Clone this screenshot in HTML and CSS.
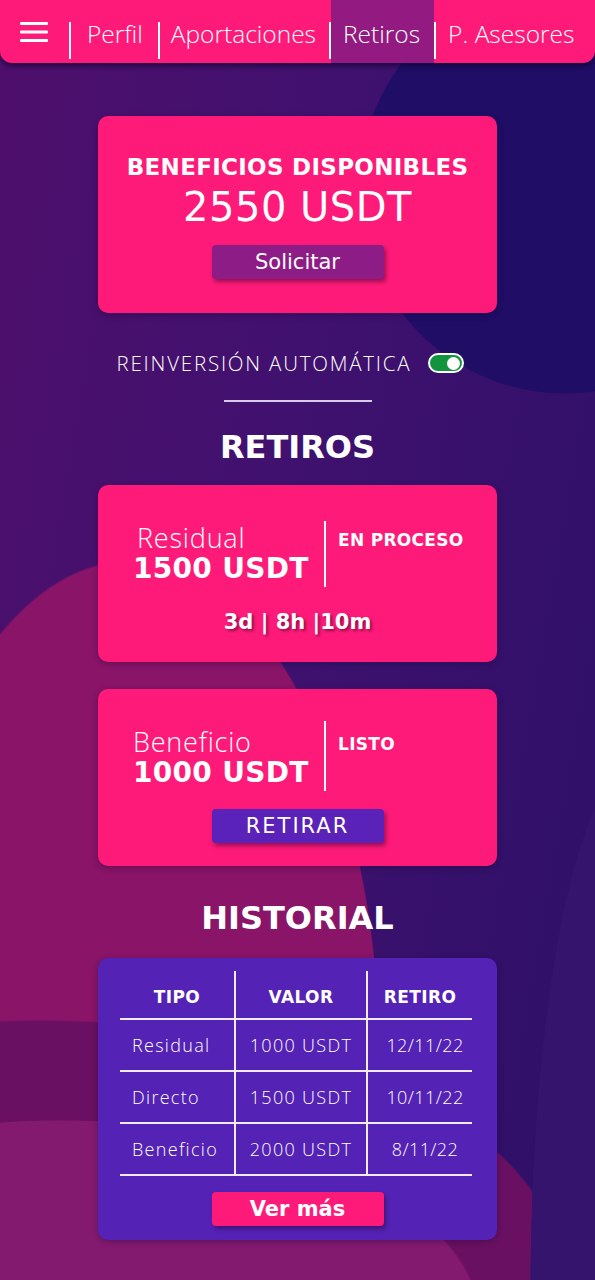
FILE: index.html
```html
<!DOCTYPE html>
<html lang="es">
<head>
<meta charset="utf-8">
<title>Retiros</title>
<link rel="stylesheet" href="styles.css">
</head>
<body>
<div class="page">
  <nav class="topbar">
    <button class="menu" aria-label="Menú">
      <svg width="28" height="20" viewBox="0 0 28 20"><rect x="0" y="0" width="28" height="3" rx="1" fill="#fff"/><rect x="0" y="8.5" width="28" height="3" rx="1" fill="#fff"/><rect x="0" y="17" width="28" height="3" rx="1" fill="#fff"/></svg>
    </button>
    <span class="sep"></span>
    <a class="tab tab-perfil">Perfil</a>
    <span class="sep"></span>
    <a class="tab tab-aport">Aportaciones</a>
    <span class="sep"></span>
    <a class="tab tab-retiros active">Retiros</a>
    <span class="sep"></span>
    <a class="tab tab-ases">P. Asesores</a>
  </nav>

  <main class="content">
    <section class="card balance">
      <h2 class="balance-title">BENEFICIOS DISPONIBLES</h2>
      <div class="balance-amount">2550 USDT</div>
      <button class="btn btn-purple">Solicitar</button>
    </section>

    <div class="reinvest">
      <span>REINVERSIÓN AUTOMÁTICA</span>
      <span class="toggle"><span class="knob"></span></span>
    </div>
    <hr class="divider">

    <h1 class="section-title retiros-title">RETIROS</h1>

    <section class="card withdraw">
      <div class="withdraw-row">
        <div class="withdraw-left">
          <div class="w-type indent">Residual</div>
          <div class="w-amount">1500 USDT</div>
        </div>
        <span class="vline"></span>
        <div class="w-status">EN PROCESO</div>
      </div>
      <div class="countdown">3d | 8h |10m</div>
    </section>

    <section class="card withdraw ready">
      <div class="withdraw-row">
        <div class="withdraw-left">
          <div class="w-type">Beneficio</div>
          <div class="w-amount">1000 USDT</div>
        </div>
        <span class="vline"></span>
        <div class="w-status">LISTO</div>
      </div>
      <button class="btn btn-violet">RETIRAR</button>
    </section>

    <h1 class="section-title historial-title">HISTORIAL</h1>

    <section class="card history">
      <table class="hist-table">
        <thead>
          <tr><th>TIPO</th><th>VALOR</th><th>RETIRO</th></tr>
        </thead>
        <tbody>
          <tr><td>Residual</td><td>1000 USDT</td><td>12/11/22</td></tr>
          <tr><td>Directo</td><td>1500 USDT</td><td>10/11/22</td></tr>
          <tr><td>Beneficio</td><td>2000 USDT</td><td>8/11/22</td></tr>
        </tbody>
      </table>
      <button class="btn btn-pink">Ver más</button>
    </section>
  </main>
</div>
</body>
</html>
```

FILE: styles.css
```css
* { box-sizing: border-box; }
html, body { margin: 0; padding: 0; }
body {
  width: 595px;
  min-height: 1280px;
  font-family: "Open Sans", "DejaVu Sans", sans-serif;
  color: #fff;
  background-color: #3a126c;
  background-image:
    radial-gradient(circle at 565px 188px, #1f0d66 0 205px, transparent 206px),
    radial-gradient(ellipse 110px 540px at 640px 1300px, #34146c 0 99.5%, transparent 100%),
    radial-gradient(ellipse 420px 200px at 60px 1320px, #841a70 0 99.5%, transparent 100%),
    radial-gradient(ellipse 520px 250px at 40px 1270px, #6a1062 0 99.5%, transparent 100%),
    radial-gradient(ellipse 250px 500px at 130px 1060px, #891468 0 99.5%, transparent 100%),
    linear-gradient(100deg, #4e0f6b 0%, #40116f 45%, #2c1068 100%);
  background-repeat: no-repeat;
}
.page { min-height: 1280px; }

/* top bar */
.topbar {
  display: flex;
  align-items: stretch;
  height: 63px;
  background: #fe1a78;
  border-radius: 0 0 12px 12px;
  box-shadow: 0 3px 5px rgba(10, 0, 40, 0.6);
  padding-left: 20px;
  position: relative;
}
.menu {
  background: none;
  border: 0;
  padding: 22px 0 0;
  margin: 0 21px 0 0;
  display: flex;
  align-items: flex-start;
  cursor: pointer;
}
.sep {
  width: 2px;
  background: #fff;
  height: 37px;
  align-self: flex-end;
  margin-bottom: 4px;
  flex: none;
}
.tab {
  display: flex;
  align-items: center;
  padding: 3px 11px 0;
  font-size: 24.5px;
  font-weight: 300;
  color: #fff;
  text-decoration: none;
  white-space: nowrap;
}
.tab-perfil { padding-left: 16px; padding-right: 15px; }
.tab-aport { padding-right: 13px; }
.tab-retiros { padding-left: 12px; padding-right: 14px; }
.tab-ases { padding-left: 12px; }
.tab.active { background: #931a80; }

/* content */
.content {
  display: flex;
  flex-direction: column;
  align-items: center;
  padding-bottom: 40px;
}
.card {
  width: 399px;
  background: #fe1a78;
  border-radius: 10px;
  box-shadow: 0 2px 6px rgba(20, 0, 40, 0.3);
}
.btn {
  width: 172px;
  height: 34px;
  border: 0;
  border-radius: 4px;
  color: #fff;
  font-family: "DejaVu Sans", sans-serif;
  font-size: 21px;
  box-shadow: 2px 3px 4px rgba(40, 0, 40, 0.45);
  padding: 0;
}
.btn-purple { background: #8e1c86; }
.btn-violet { background: #5a22b8; letter-spacing: 2px; }
.btn-pink { background: #fe1a78; font-weight: bold; }

/* balance card */
.balance {
  margin-top: 53px;
  height: 197px;
  display: flex;
  flex-direction: column;
  align-items: center;
  padding-top: 37px;
}
.balance-title {
  margin: 0;
  font-family: "DejaVu Sans", sans-serif;
  font-weight: bold;
  font-size: 23px;
  line-height: 28px;
  letter-spacing: 0.3px;
}
.balance-amount {
  font-family: "DejaVu Sans", sans-serif;
  font-size: 40px;
  line-height: 46px;
  letter-spacing: 0.5px;
  margin-top: 3px;
}
.balance .btn { margin-top: 15px; }

/* reinversion */
.reinvest {
  margin-top: 37px;
  display: flex;
  align-items: center;
  gap: 17px;
  font-size: 20.5px;
  font-weight: 300;
  letter-spacing: 1.8px;
  line-height: 26px;
  padding-right: 14px;
}
.toggle {
  width: 36px;
  height: 20px;
  border-radius: 10px;
  background: #12943f;
  border: 2px solid #fff;
  display: flex;
  align-items: center;
  justify-content: flex-end;
  padding-right: 2px;
}
.knob {
  width: 13px;
  height: 13px;
  border-radius: 50%;
  background: #fff;
}
.divider {
  width: 148px;
  height: 2px;
  border: 0;
  background: #d9c9ea;
  margin: 24px 0 0;
}

.section-title {
  margin: 0;
  font-family: "DejaVu Sans", sans-serif;
  font-weight: bold;
  font-size: 32px;
  line-height: 38px;
}
.retiros-title { margin-top: 26px; }
.historial-title { margin-top: 33px; }

/* withdraw cards */
.withdraw {
  margin-top: 19px;
  height: 177px;
  padding: 36px 0 0 35px;
  display: flex;
  flex-direction: column;
}
.withdraw.ready { margin-top: 27px; padding-top: 32px; }
.withdraw-row {
  display: flex;
  align-items: flex-start;
}
.withdraw-left { width: 191px; padding-top: 2px; }
.withdraw.ready .withdraw-left { padding-top: 6px; }
.w-type {
  font-size: 27px;
  font-weight: 300;
  line-height: 30px;
  letter-spacing: 0.8px;
}
.w-type.indent { padding-left: 4px; }
.w-amount {
  font-family: "DejaVu Sans", sans-serif;
  font-weight: bold;
  font-size: 28px;
  line-height: 32px;
  letter-spacing: 0.3px;
  white-space: nowrap;
}
.vline {
  width: 2px;
  height: 66px;
  background: #fff;
  flex: none;
}
.withdraw.ready .vline { height: 70px; }
.w-status {
  padding-left: 12px;
  padding-top: 10px;
  font-family: "DejaVu Sans", sans-serif;
  font-weight: bold;
  font-size: 17px;
  line-height: 18px;
  letter-spacing: 0.3px;
}
.withdraw.ready .w-status { padding-top: 14px; }
.countdown {
  margin-top: 22px;
  margin-left: -35px;
  text-align: center;
  font-family: "DejaVu Sans", sans-serif;
  font-weight: bold;
  font-size: 21px;
  line-height: 26px;
  text-shadow: 2px 2px 3px rgba(60, 0, 40, 0.55);
}
.withdraw.ready .btn {
  align-self: center;
  margin: 18px 0 0 -35px;
}

/* history */
.history {
  margin-top: 21px;
  height: 282px;
  background: #5522b6;
  padding: 13px 3px 0 0;
  display: flex;
  flex-direction: column;
  align-items: center;
}
.hist-table {
  width: 352px;
  border-collapse: collapse;
}
.hist-table th, .hist-table td {
  border: 2px solid #f2eaff;
  padding: 0;
}
.hist-table tr > :first-child { border-left: 0; }
.hist-table tr > :last-child { border-right: 0; }
.hist-table thead th { border-top: 0; }
.hist-table th {
  height: 48px;
  font-family: "DejaVu Sans", sans-serif;
  font-weight: bold;
  font-size: 17px;
  letter-spacing: 0.4px;
  text-align: center;
  padding-top: 4px;
}
.hist-table th:nth-child(1) { width: 115px; }
.hist-table th:nth-child(2) { width: 132px; }
.hist-table td {
  height: 52px;
  font-size: 18px;
  font-weight: 300;
  letter-spacing: 1.3px;
  text-align: center;
  white-space: nowrap;
}
.hist-table td:first-child { text-align: left; padding-left: 12px; }
.hist-table td:last-child { letter-spacing: 0.4px; padding-left: 10px; }
.history .btn { margin-top: 16px; margin-left: 3px; }
```
